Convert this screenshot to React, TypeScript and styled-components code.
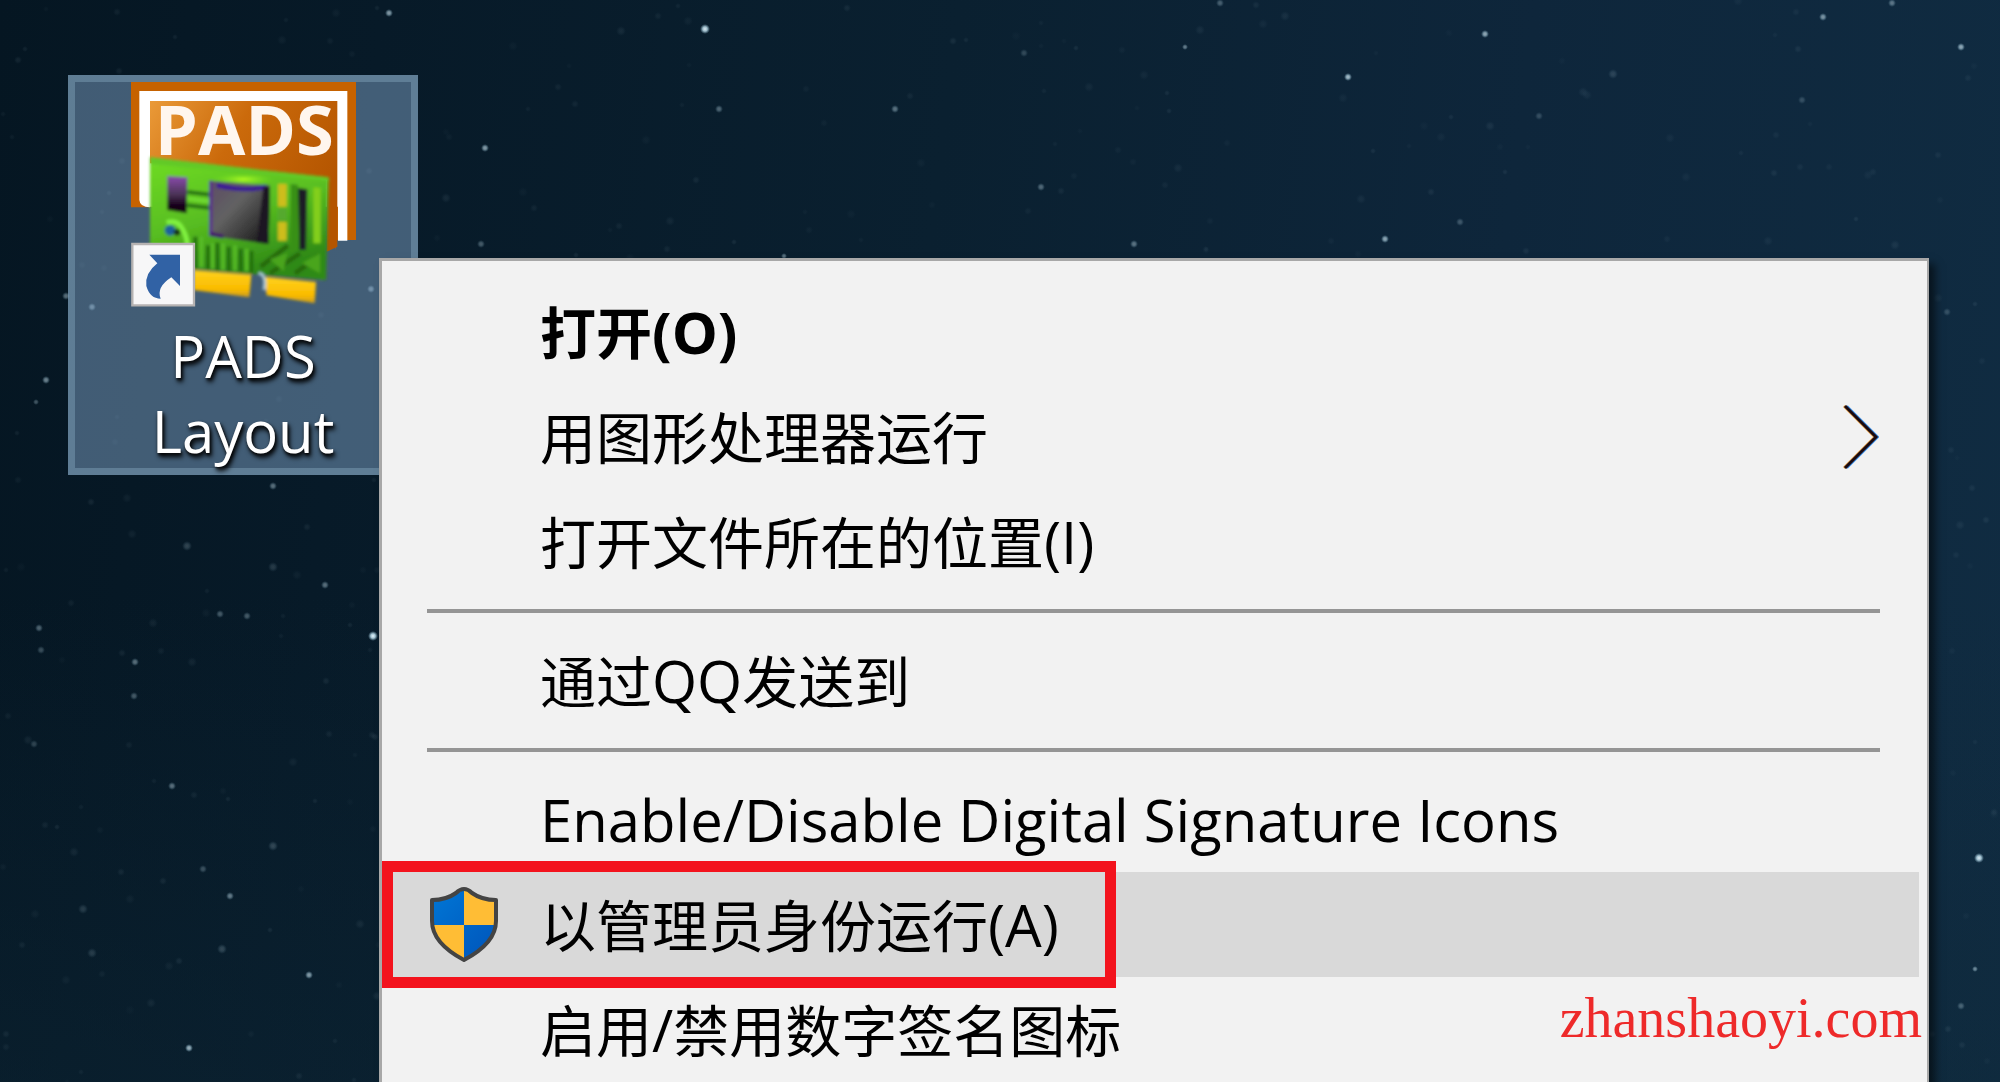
import React from "react";
import styled, { createGlobalStyle } from "styled-components";

const GlobalStyle = createGlobalStyle`
  *, *::before, *::after { box-sizing: border-box; }
  body { margin: 0; background: #061824; }
`;

const Desktop = styled.main`
  position: relative;
  width: 100%;
  height: 100vh;
  overflow: hidden;
  font-family: "Open Sans", "Noto Sans", "Noto Sans CJK SC", sans-serif;
  background:
    linear-gradient(180deg, rgba(14, 40, 56, 0) 55%, rgba(14, 40, 56, 0.4) 100%),
    linear-gradient(97deg, #051622 0%, #071a28 18%, #0a2030 45%, #0e263b 72%, #102c42 100%);
`;

const Sky = styled.svg`
  position: absolute;
  inset: 0;
  width: 100%;
  height: 100%;
`;

const Shortcut = styled.button`
  position: absolute;
  top: 75px;
  left: 68px;
  width: 350px;
  display: flex;
  flex-direction: column;
  align-items: center;
  gap: 11px;
  padding: 0;
  border: 7px solid rgba(150, 185, 210, 0.35);
  background: rgba(126, 162, 198, 0.5);
  color: #fff;
  font: inherit;
`;

const ShortcutLabel = styled.span`
  width: 240px;
  font-size: 58px;
  line-height: 75px;
  text-align: center;
  text-shadow: 2px 4px 5px #000, 1px 2px 3px rgba(0, 0, 0, 0.8);
`;

const Menu = styled.ul`
  position: absolute;
  top: 258px;
  left: 379px;
  right: 71px;
  margin: 0;
  padding: 18px 8px 18px 6px;
  list-style: none;
  background: #f2f2f2;
  border: 3px solid #a8a8a8;
  border-right-width: 2px;
  box-shadow: 6px 6px 8px rgba(0, 0, 0, 0.55);
`;

const MenuRow = styled.li`
  position: relative;
`;

const MenuButton = styled.button<{ $active?: boolean; $strong?: boolean }>`
  display: grid;
  grid-template-columns: 152px 1fr auto;
  align-items: center;
  width: 100%;
  height: 105px;
  padding: 0 40px 0 0;
  border: 0;
  background: ${(p) => (p.$active ? "#d9d9d9" : "transparent")};
  color: #000;
  font-family: inherit;
  font-size: 56px;
  font-weight: ${(p) => (p.$strong ? 700 : 400)};
  line-height: 76px;
  text-align: left;
  white-space: nowrap;
`;

const Latin = styled.span`
  font-size: 58px;
`;

const IconCell = styled.span`
  display: flex;
  justify-content: center;
`;

const Divider = styled.li`
  height: 4px;
  margin: 15px 39px;
  background: #959595;
`;

const Marker = styled.span`
  position: absolute;
  top: -11px;
  bottom: -11px;
  left: -6px;
  width: 734px;
  border: 11px solid #f3131d;
  pointer-events: none;
`;

const Watermark = styled.a`
  position: absolute;
  right: 78px;
  bottom: 32px;
  color: #ee2a2a;
  font-family: "Liberation Serif", serif;
  font-size: 56px;
  line-height: 64px;
  text-decoration: none;
`;

type Star = [number, number, number, number];

// x, y, radius, opacity
const stars: Star[] = [
  [705, 29, 4, 0.95], [389, 13, 3, 0.6], [719, 109, 3, 0.35], [895, 109, 3, 0.4],
  [485, 148, 3, 0.6], [481, 244, 3, 0.3], [784, 256, 2, 0.4], [46, 380, 3, 0.5],
  [273, 486, 3, 0.4], [66, 296, 3, 0.4], [36, 402, 2, 0.3], [1485, 34, 3, 0.65],
  [1348, 77, 3, 0.75], [1385, 239, 3, 0.65], [1134, 244, 3, 0.4], [1041, 187, 3, 0.35],
  [1823, 17, 3, 0.55], [1961, 47, 3, 0.65], [1185, 47, 2, 0.45], [1220, 3, 3, 0.3],
  [1892, 3, 3, 0.4], [1024, 53, 3, 0.2], [1613, 74, 4, 0.15], [1539, 116, 3, 0.2],
  [1460, 222, 3, 0.25], [1802, 100, 3, 0.2], [1947, 312, 3, 0.2], [373, 636, 4, 1],
  [172, 786, 3, 0.4], [230, 896, 3, 0.45], [309, 975, 3, 0.6], [189, 1048, 3, 0.7],
  [135, 662, 3, 0.4], [134, 696, 3, 0.3], [325, 585, 3, 0.4], [220, 614, 3, 0.3],
  [247, 616, 3, 0.3], [39, 628, 3, 0.35], [41, 650, 3, 0.25], [34, 744, 3, 0.2],
  [273, 567, 4, 0.15], [187, 546, 4, 0.2], [273, 846, 4, 0.2], [203, 869, 3, 0.25],
  [222, 949, 4, 0.2], [83, 909, 4, 0.15], [92, 953, 4, 0.15], [1979, 858, 4, 0.95],
  [1975, 969, 2, 0.5], [1961, 1006, 3, 0.3], [92, 307, 3, 0.5], [371, 289, 3, 0.5],
];

// Faint dust between the named stars, from a fixed seed.
const dust: Star[] = (() => {
  let seed = 4211;
  const next = () => {
    seed = (seed * 16807) % 2147483647;
    return seed / 2147483647;
  };
  return Array.from({ length: 620 }, (): Star => [
    Math.round(next() * 2000),
    Math.round(next() * 1082),
    2 + Math.round(next() * 2),
    0.02 + next() * 0.05,
  ]);
})();

function NightSky() {
  return (
    <Sky aria-hidden="true">
      <defs>
        <radialGradient id="glow">
          <stop offset="0" stopColor="#e9f7ff" />
          <stop offset="0.45" stopColor="#bfe0ee" stopOpacity="0.85" />
          <stop offset="1" stopColor="#8ab4c8" stopOpacity="0" />
        </radialGradient>
      </defs>
      {[...dust, ...stars].map(([x, y, r, o], i) => (
        <circle key={i} cx={x} cy={y} r={r + 1} opacity={o} fill="url(#glow)" />
      ))}
    </Sky>
  );
}

function PadsIcon() {
  return (
    <svg width="225" height="225" viewBox="243 66 675 675" aria-hidden="true">
      <defs>
        <linearGradient id="orange" x1="0" y1="0" x2="1" y2="0.5">
          <stop offset="0" stopColor="#ea9a38" />
          <stop offset="0.45" stopColor="#cb6a0b" />
          <stop offset="1" stopColor="#b45500" />
        </linearGradient>
        <linearGradient id="board" x1="0" y1="0" x2="0.4" y2="1">
          <stop offset="0" stopColor="#6fdc25" />
          <stop offset="0.55" stopColor="#58bd20" />
          <stop offset="1" stopColor="#2f8a17" />
        </linearGradient>
        <linearGradient id="chip" x1="0" y1="0" x2="1" y2="1">
          <stop offset="0" stopColor="#5c4b66" />
          <stop offset="0.4" stopColor="#626262" />
          <stop offset="1" stopColor="#101010" />
        </linearGradient>
        <linearGradient id="part" x1="0" y1="0" x2="0" y2="1">
          <stop offset="0" stopColor="#8a4bae" />
          <stop offset="0.5" stopColor="#4a3355" />
          <stop offset="0.8" stopColor="#130018" />
        </linearGradient>
        <linearGradient id="gold" x1="0" y1="0" x2="0" y2="1">
          <stop offset="0" stopColor="#ffd21c" />
          <stop offset="0.7" stopColor="#fabb00" />
          <stop offset="1" stopColor="#c99b1c" />
        </linearGradient>
        <radialGradient id="shine">
          <stop offset="0" stopColor="#b7ff22" />
          <stop offset="1" stopColor="#6fdc25" stopOpacity="0" />
        </radialGradient>
        <filter id="soft" x="-5%" y="-5%" width="110%" height="110%">
          <feGaussianBlur stdDeviation="5" />
        </filter>
      </defs>
      <path d="M243 66H918V540H858V570L830 440H300V442H243Z" fill="#c66200" />
      <path d="M268 93H892V542H864V440H300V442Q270 442 268 420Z" fill="#fff" />
      <path d="M300 123H862V560L830 575V360L300 310Z" fill="url(#orange)" />
      <text x="583" y="286" textAnchor="middle" fontFamily='"Open Sans", sans-serif' fontWeight="700" fontSize="206" fill="#fff6ee">PADS</text>
      <g filter="url(#soft)">
        <path d="M300 292L560 322L836 352L828 660L640 645L436 626L300 620Z" fill="url(#board)" />
        <path d="M300 292L836 352V364L300 312Z" fill="#62c928" />
        <ellipse cx="580" cy="358" rx="95" ry="18" fill="url(#shine)" />
        <path d="M412 396L482 404M412 436L482 444" stroke="#277312" strokeWidth="12" />
        <path d="M412 416L482 424" stroke="#73df35" strokeWidth="8" />
        <path d="M352 348L412 352L410 460L352 450Z" fill="url(#part)" />
        <path d="M482 362L660 376L656 552L482 528Z" fill="url(#chip)" />
        <path d="M482 528V362" stroke="#5a2a90" strokeWidth="10" />
        <path d="M500 376Q580 396 650 380" fill="none" stroke="#3a1496" strokeWidth="14" />
        <path d="M482 522L520 530" stroke="#42106c" strokeWidth="12" />
        <path d="M640 380H660L656 552L620 548Z" fill="#1c1422" />
        <path d="M684 372H710V440H684ZM684 486H710V542H684Z" fill="#cdbd1c" />
        <path d="M684 445H710V480H684Z" fill="#55a92e" />
        <path d="M722 372L744 374V560L722 580Z" fill="#399018" />
        <path d="M744 384L772 388L768 570H748Z" fill="#1d1a26" />
        <path d="M790 382L812 384V550H790Z" fill="#83cf1a" />
        <path d="M350 488Q384 476 400 512Q412 534 412 560" fill="none" stroke="#81f240" strokeWidth="14" />
        <circle cx="360" cy="511" r="16" fill="#1b5f9c" />
        <circle cx="381" cy="517" r="10" fill="#143218" />
        <path d="M436 530V626M474 556V628M502 548V632M536 560V634M572 566V634M604 572V638" stroke="#237010" strokeWidth="12" />
        <path d="M454 530V622M488 550V626M519 550V630M555 556V632M590 566V634" stroke="#59bd28" strokeWidth="10" />
        <path d="M632 620L714 556M660 640L750 580M735 640L806 588" stroke="#25690f" strokeWidth="14" />
        <path d="M660 598L712 580L700 634ZM756 610L810 580V640Z" fill="#4aa51c" />
        <path d="M430 630L604 644L598 712L430 690Z" fill="url(#gold)" />
        <path d="M642 650L798 666L794 730L650 706Z" fill="url(#gold)" />
        <path d="M626 640Q650 644 642 690" fill="none" stroke="#a9c6d4" strokeWidth="9" />
      </g>
      <path d="M247 552H432V736H247Z" fill="#f7f7f8" stroke="#b6b3b2" strokeWidth="7" />
      <path d="M298 584H390V678L364 652Q318 682 332 716Q300 716 289 678Q284 640 322 610Z" fill="#3162a5" />
    </svg>
  );
}

function ShieldIcon() {
  return (
    <svg width="70" height="76" viewBox="0 0 70 76" aria-hidden="true">
      <defs>
        <clipPath id="shield">
          <path d="M35 2C27 8 16 13 3 13V34C3 52 18 64 35 73C52 64 67 52 67 34V13C54 13 43 8 35 2Z" />
        </clipPath>
        <linearGradient id="blue" x1="0" y1="0" x2="1" y2="1">
          <stop offset="0" stopColor="#0078d7" />
          <stop offset="1" stopColor="#0052b8" />
        </linearGradient>
      </defs>
      <g clipPath="url(#shield)">
        <path d="M0 0H70V76H0Z" fill="url(#blue)" />
        <path d="M35 0H70V38H35ZM0 38H35V76H0Z" fill="#ffbd35" />
      </g>
      <path d="M35 2Q31 2 27 6C20 11 13 13 3 13V34C3 52 18 64 35 73C52 64 67 52 67 34V13C57 13 50 11 43 6Q39 2 35 2Z" fill="none" stroke="#444" strokeWidth="4" strokeLinejoin="round" />
    </svg>
  );
}

function Chevron() {
  return (
    <svg width="36" height="66" viewBox="0 0 36 66" fill="none" aria-hidden="true">
      <path d="M1 2L32 33L1 64" stroke="#e59a3c" strokeWidth="3" />
      <path d="M4 2L35 33L4 64" stroke="#3b8fe8" strokeWidth="2" />
      <path d="M2 2L33 33L2 64" stroke="#1a0a12" strokeWidth="3" />
    </svg>
  );
}

interface ItemProps {
  label: string;
  icon?: React.ReactNode;
  submenu?: boolean;
  active?: boolean;
  strong?: boolean;
  marked?: boolean;
}

// Latin runs are set a little larger than the Chinese characters beside them.
function MixedText({ text }: { text: string }) {
  const runs = text.match(/[\x20-\x7e]+|[^\x20-\x7e]+/g) ?? [];
  return (
    <span>
      {runs.map((run, i) => (/^[\x20-\x7e]/.test(run) ? <Latin key={i}>{run}</Latin> : run))}
    </span>
  );
}

function Item({ label, icon, submenu, active, strong, marked }: ItemProps) {
  return (
    <MenuRow role="none">
      <MenuButton type="button" role="menuitem" $active={active} $strong={strong} aria-haspopup={submenu ? "menu" : undefined}>
        <IconCell>{icon}</IconCell>
        <MixedText text={label} />
        {submenu && <Chevron />}
      </MenuButton>
      {marked && <Marker />}
    </MenuRow>
  );
}

export default function App() {
  return (
    <>
      <GlobalStyle />
      <Desktop>
        <NightSky />
        <Shortcut type="button">
          <PadsIcon />
          <ShortcutLabel>PADS Layout</ShortcutLabel>
        </Shortcut>
        <Menu role="menu">
          <Item label="打开(O)" strong />
          <Item label="用图形处理器运行" submenu />
          <Item label="打开文件所在的位置(I)" />
          <Divider role="separator" />
          <Item label="通过QQ发送到" />
          <Divider role="separator" />
          <Item label="Enable/Disable Digital Signature Icons" />
          <Item label="以管理员身份运行(A)" icon={<ShieldIcon />} active marked />
          <Item label="启用/禁用数字签名图标" />
        </Menu>
        <Watermark href="#">zhanshaoyi.com</Watermark>
      </Desktop>
    </>
  );
}
